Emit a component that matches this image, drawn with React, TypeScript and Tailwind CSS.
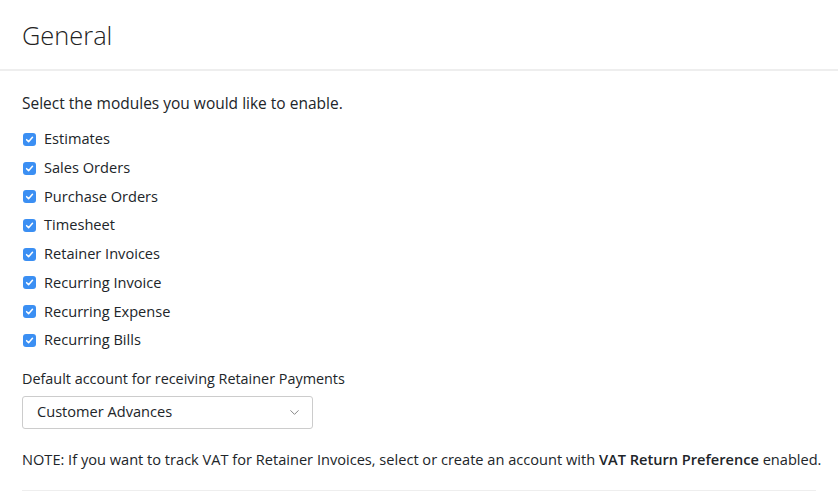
import React, { useState } from 'react';
import { ChevronDown } from 'lucide-react';

const modules = [
  'Estimates',
  'Sales Orders',
  'Purchase Orders',
  'Timesheet',
  'Retainer Invoices',
  'Recurring Invoice',
  'Recurring Expense',
  'Recurring Bills',
];

const Check: React.FC<{ checked: boolean }> = ({ checked }) => (
  <span
    className={`flex h-[13px] w-[13px] items-center justify-center rounded-[3px] ${
      checked ? 'bg-[#3b8ff3]' : 'border border-[#bbb] bg-white'
    }`}
  >
    {checked && (
      <svg width="9" height="9" viewBox="0 0 10 10" fill="none">
        <path d="M1.8 5.2l2.2 2.2 4.3-4.8" stroke="#fff" strokeWidth="1.7" strokeLinecap="round" strokeLinejoin="round" />
      </svg>
    )}
  </span>
);

export default function App() {
  const [enabled, setEnabled] = useState<string[]>(modules);

  const toggle = (name: string) =>
    setEnabled((prev) => (prev.includes(name) ? prev.filter((m) => m !== name) : [...prev, name]));

  return (
    <div className="min-h-screen bg-white text-[#212529] font-['Open_Sans','Lato',sans-serif]">
      {/* Page header */}
      <div className="h-[71px] border-b-2 border-[#eeeeee] px-[22px] pt-[18px]">
        <h1 className="text-[25.4px] font-light leading-[34px] text-[#222]">General</h1>
      </div>

      <div className="px-[22px] pt-[21px]">
        <p className="text-[15.5px] leading-[22px]">Select the modules you would like to enable.</p>

        {/* Module list */}
        <div className="mt-[11px] flex flex-col">
          {modules.map((name) => (
            <label
              key={name}
              className="flex h-[28.7px] cursor-pointer items-center gap-[8px] pl-[1px] text-[14.6px]"
              onClick={() => toggle(name)}
            >
              <Check checked={enabled.includes(name)} />
              <span>{name}</span>
            </label>
          ))}
        </div>

        <p className="mt-[14px] text-[14.4px] leading-[20px]">Default account for receiving Retainer Payments</p>

        {/* Account dropdown */}
        <button className="mt-[7px] flex h-[33px] w-[291px] items-center justify-between rounded-[3px] border border-[#cccccc] bg-white pl-[14px] pr-[10px] text-[14.6px]">
          <span>Customer Advances</span>
          <ChevronDown size={15} strokeWidth={1.6} className="text-[#888]" />
        </button>

        <p className="mt-[20px] whitespace-nowrap text-[14.6px] leading-[20px]">
          NOTE: If you want to track VAT for Retainer Invoices, select or create an account with{' '}
          <span className="font-semibold">VAT Return Preference</span> enabled.
        </p>

        <div className="mt-[21px] border-t border-[#eeeeee]" />
      </div>
    </div>
  );
}
